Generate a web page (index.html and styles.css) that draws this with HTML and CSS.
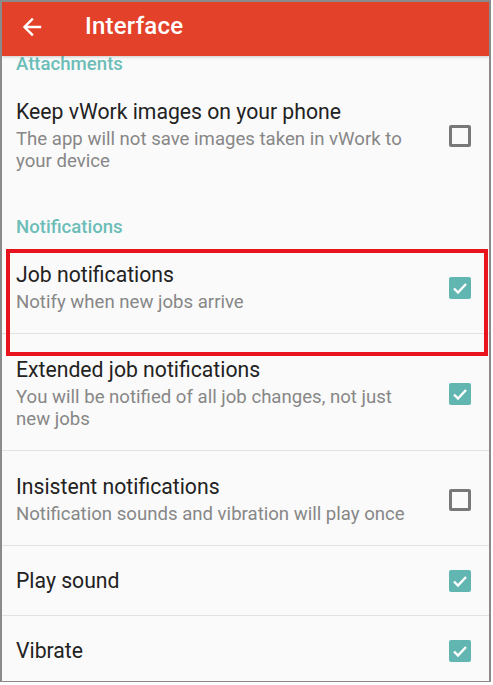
FILE: index.html
```html
<!DOCTYPE html>
<html lang="en">
<head>
    <meta charset="UTF-8">
    <meta name="viewport" content="width=device-width, initial-scale=1.0">
    <title>Interface</title>
    <link rel="stylesheet" href="styles.css">
</head>
<body>
    <div class="screen">
        <header class="toolbar">
            <svg class="back" width="24" height="24" viewBox="0 0 24 24">
                <path d="M20 12H5M12 4.5L4.5 12l7.5 7.5" fill="none" stroke="#fff" stroke-width="2.4" stroke-linecap="square"/>
            </svg>
            <h1>Interface</h1>
        </header>

        <div class="scroll">
            <div class="list">
                <div class="category">Attachments</div>

                <div class="pref first">
                    <div class="text">
                        <div class="title">Keep vWork images on your phone</div>
                        <div class="summary">The app will not save images taken in vWork to your device</div>
                    </div>
                    <span class="check"></span>
                </div>

                <div class="category">Notifications</div>

                <div class="pref first">
                    <div class="text">
                        <div class="title">Job notifications</div>
                        <div class="summary">Notify when new jobs arrive</div>
                    </div>
                    <span class="check on"><svg viewBox="0 0 22 22"><path d="M5 11.5l4 4 8-8.5" fill="none" stroke="#fff" stroke-width="2.4"/></svg></span>
                </div>

                <div class="pref">
                    <div class="text">
                        <div class="title">Extended job notifications</div>
                        <div class="summary">You will be notified of all job changes, not just new jobs</div>
                    </div>
                    <span class="check on"><svg viewBox="0 0 22 22"><path d="M5 11.5l4 4 8-8.5" fill="none" stroke="#fff" stroke-width="2.4"/></svg></span>
                </div>

                <div class="pref">
                    <div class="text">
                        <div class="title">Insistent notifications</div>
                        <div class="summary">Notification sounds and vibration will play once</div>
                    </div>
                    <span class="check"></span>
                </div>

                <div class="pref one">
                    <div class="text">
                        <div class="title">Play sound</div>
                    </div>
                    <span class="check on"><svg viewBox="0 0 22 22"><path d="M5 11.5l4 4 8-8.5" fill="none" stroke="#fff" stroke-width="2.4"/></svg></span>
                </div>

                <div class="pref one">
                    <div class="text">
                        <div class="title">Vibrate</div>
                    </div>
                    <span class="check on"><svg viewBox="0 0 22 22"><path d="M5 11.5l4 4 8-8.5" fill="none" stroke="#fff" stroke-width="2.4"/></svg></span>
                </div>
            </div>
        </div>

        <!-- annotation box drawn over the job notifications row -->
        <div class="highlight"></div>
    </div>
</body>
</html>
```

FILE: styles.css
```css
body, html {
    margin: 0;
    padding: 0;
    background: #ffffff;
    font-family: Roboto, 'Noto Sans', sans-serif;
}

.screen {
    position: relative;
    width: 491px;
    height: 682px;
    box-sizing: border-box;
    border: 2px solid #8a8a8a;
    border-bottom-width: 1px;
    background: #fafafa;
    display: flex;
    flex-direction: column;
    overflow: hidden;
}

/* Toolbar */
.toolbar {
    height: 54px;
    flex-shrink: 0;
    background: #e4412a;
    display: flex;
    align-items: center;
    padding-left: 18px;
    box-shadow: 0 1px 3px rgba(0, 0, 0, 0.2);
    position: relative;
    z-index: 2;
}

.toolbar .back {
    width: 24px;
    height: 24px;
    margin-top: -4px;
}

.toolbar h1 {
    margin: 0 0 0 41px;
    margin-top: -6px;
    color: #ffffff;
    font-size: 24px;
    font-weight: 500;
    letter-spacing: 0.2px;
}

/* List */
.scroll {
    flex: 1;
    overflow: hidden;
}

.list {
    margin-top: -4px;
}

.category {
    padding: 0 14px;
    line-height: 24px;
    font-size: 18.6px;
    font-weight: 500;
    color: #6cbdb8;
}

.pref + .category {
    padding-top: 23px;
}

.pref {
    display: flex;
    align-items: center;
    padding: 23px 18px 20px 14px;
    border-top: 1px solid #e1e1e1;
}

.pref.first {
    border-top: none;
}

.pref.one {
    padding-top: 22px;
    padding-bottom: 21px;
}

.text {
    flex: 1;
    padding-right: 32px;
}

.title {
    font-size: 21.2px;
    line-height: 26px;
    color: #222222;
}

.summary {
    margin-top: 3px;
    font-size: 18.6px;
    line-height: 22px;
    color: #878787;
}

.check {
    width: 22px;
    height: 22px;
    box-sizing: border-box;
    border: 3px solid #787878;
    border-radius: 2px;
    flex-shrink: 0;
}

.check.on {
    border: none;
    background: #62b6b1;
}

.check svg {
    display: block;
    width: 22px;
    height: 22px;
}

.highlight {
    position: absolute;
    left: 4px;
    top: 247px;
    width: 482px;
    height: 107px;
    box-sizing: border-box;
    border: 4px solid #e8141d;
}
```
